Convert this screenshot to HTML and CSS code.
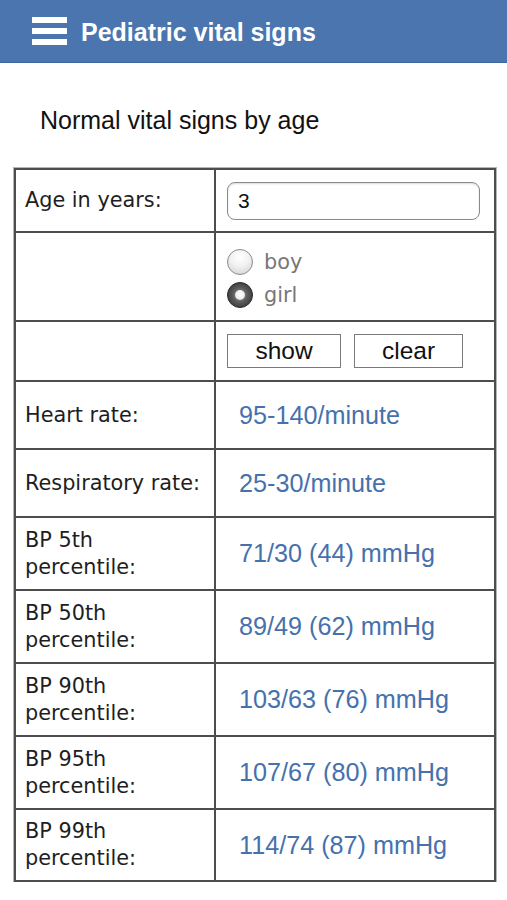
FILE: index.html
```html
<!DOCTYPE html>
<html lang="en">
<head>
<meta charset="utf-8">
<title>Pediatric vital signs</title>
<link rel="stylesheet" href="styles.css">
</head>
<body>
<header class="topbar">
  <svg class="menu-icon" width="35" height="28" viewBox="0 0 35 28" aria-hidden="true">
    <rect x="0" y="0" width="35" height="6" fill="#fff"/>
    <rect x="0" y="11" width="35" height="6" fill="#fff"/>
    <rect x="0" y="22" width="35" height="6" fill="#fff"/>
  </svg>
  <span class="topbar-title">Pediatric vital signs</span>
</header>

<h1 class="page-title">Normal vital signs by age</h1>

<table class="vitals">
  <colgroup><col class="col-label"><col class="col-value"></colgroup>
  <tr class="r-age">
    <td class="label">Age in years:</td>
    <td class="control"><div class="age-input">3</div></td>
  </tr>
  <tr class="r-sex">
    <td class="label"></td>
    <td class="control">
      <div class="radio-row"><span class="radio"></span><span class="radio-text">boy</span></div>
      <div class="radio-row"><span class="radio checked"></span><span class="radio-text">girl</span></div>
    </td>
  </tr>
  <tr class="r-btn">
    <td class="label"></td>
    <td class="control">
      <div class="buttons"><span class="btn btn-show">show</span><span class="btn btn-clear">clear</span></div>
    </td>
  </tr>
  <tr class="r-short">
    <td class="label">Heart rate:</td>
    <td class="value">95-140/minute</td>
  </tr>
  <tr class="r-short">
    <td class="label">Respiratory rate:</td>
    <td class="value">25-30/minute</td>
  </tr>
  <tr class="r-bp">
    <td class="label">BP 5th<br>percentile:</td>
    <td class="value">71/30 (44) mmHg</td>
  </tr>
  <tr class="r-bp">
    <td class="label">BP 50th<br>percentile:</td>
    <td class="value">89/49 (62) mmHg</td>
  </tr>
  <tr class="r-bp">
    <td class="label">BP 90th<br>percentile:</td>
    <td class="value">103/63 (76) mmHg</td>
  </tr>
  <tr class="r-bp">
    <td class="label">BP 95th<br>percentile:</td>
    <td class="value">107/67 (80) mmHg</td>
  </tr>
  <tr class="r-bp r-last">
    <td class="label">BP 99th<br>percentile:</td>
    <td class="value">114/74 (87) mmHg</td>
  </tr>
</table>
</body>
</html>
```

FILE: styles.css
```css
html, body {
  margin: 0;
  padding: 0;
  background: #ffffff;
}

body {
  width: 507px;
  font-family: "Liberation Sans", Arial, sans-serif;
  color: #111;
}

.topbar {
  height: 63px;
  background: #4a75ae;
  border-bottom: 1px solid #3f68a0;
  box-sizing: border-box;
  display: flex;
  align-items: center;
  padding-left: 32px;
  gap: 14px;
}

.menu-icon {
  display: block;
  flex: none;
}

.topbar-title {
  color: #ffffff;
  font-weight: bold;
  font-size: 25px;
  line-height: 30px;
  padding-top: 1px;
}

.page-title {
  margin: 42px 0 0 0;
  padding-left: 40px;
  font-weight: normal;
  font-size: 25px;
  line-height: 30px;
  color: #111;
}

.vitals {
  margin: 33px 0 0 14px;
  width: 480px;
  border-collapse: collapse;
  border: 2px solid #5a5a5a;
  outline: 1px solid #b5b5b5;
  table-layout: fixed;
}

.col-label { width: 200px; }
.col-value { width: 280px; }

.vitals td {
  border: 2px solid #4d4d4d;
  padding: 0;
  vertical-align: middle;
}

.r-age { height: 63px; }
.r-sex { height: 89px; }
.r-btn { height: 60px; }
.r-short { height: 68px; }
.r-bp { height: 73px; }
.r-last { height: 72px; }

.label {
  font-family: "DejaVu Sans", Verdana, sans-serif;
  font-size: 20.8px;
  line-height: 27px;
  color: #1e1e1e;
  padding-left: 9px !important;
}

.control {
  padding-left: 11px !important;
}

.value {
  font-family: "Liberation Sans", Arial, sans-serif;
  font-size: 25.2px;
  color: #4571ad;
  padding-left: 23px !important;
}

.age-input {
  box-sizing: border-box;
  width: 253px;
  height: 38px;
  border: 1.5px solid #8a8a8a;
  border-radius: 8px;
  box-shadow: inset 0 1px 2px rgba(0,0,0,0.15);
  font-family: "Liberation Sans", Arial, sans-serif;
  font-size: 21px;
  line-height: 35px;
  padding-left: 10px;
  color: #111;
}

.radio-row {
  display: flex;
  align-items: center;
  height: 33px;
}

.radio {
  box-sizing: border-box;
  width: 26px;
  height: 26px;
  border-radius: 50%;
  border: 1.5px solid #8c8c8c;
  background: radial-gradient(circle at 50% 30%, #ffffff 0%, #f1f1f1 45%, #cfcfcf 100%);
  flex: none;
  position: relative;
}

.radio.checked {
  border-color: #2a2a2a;
  background: radial-gradient(circle at 50% 50%, #9a9a9a 0%, #5a5a5a 45%, #2a2a2a 100%);
}

.radio.checked::after {
  content: "";
  position: absolute;
  left: 50%;
  top: 50%;
  width: 10px;
  height: 10px;
  margin: -5px 0 0 -5px;
  border-radius: 50%;
  background: radial-gradient(circle at 50% 45%, #ffffff 0%, #f0f0f0 55%, #bdbdbd 100%);
}

.radio-text {
  font-family: "DejaVu Sans", Verdana, sans-serif;
  font-size: 20.8px;
  color: #777;
  margin-left: 11px;
}

.r-sex .control {
  padding-top: 4px !important;
}

.buttons {
  display: flex;
  gap: 13px;
}

.btn {
  box-sizing: border-box;
  display: flex;
  align-items: center;
  justify-content: center;
  height: 34px;
  border: 1.5px solid #7a7a7a;
  background: #ffffff;
  font-family: "Liberation Sans", Arial, sans-serif;
  font-size: 24.5px;
  color: #111;
}

.btn-show { width: 114px; }
.btn-clear { width: 109px; }
```
